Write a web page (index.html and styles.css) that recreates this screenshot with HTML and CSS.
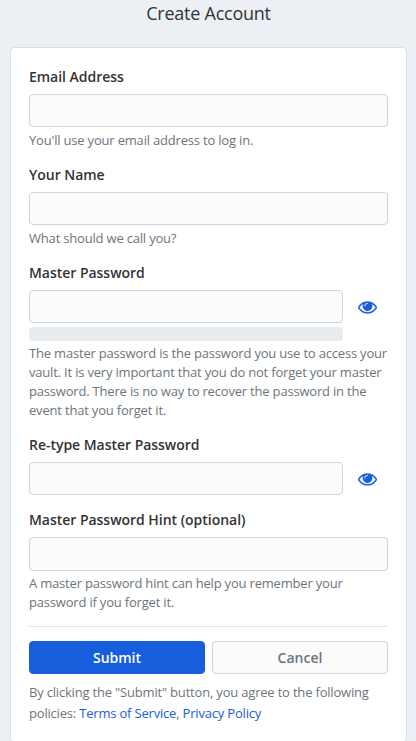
FILE: index.html
```html
<!DOCTYPE html>
<html lang="en">
<head>
<meta charset="utf-8">
<title>Create Account</title>
<link rel="stylesheet" href="styles.css">
</head>
<body>
<svg class="defs" aria-hidden="true">
  <symbol id="eye" viewBox="0 384 1792 1152"><path d="M1664 960q-152-236-381-353 61 104 61 225 0 185-131.500 316.500t-316.500 131.500-316.500-131.500-131.500-316.500q0-121 61-225-229 117-381 353 133 205 333.500 326.500t434.500 121.500 434.500-121.500 333.500-326.500zm-720-384q0-20-14-34t-34-14q-125 0-214.500 89.500t-89.500 214.500q0 20 14 34t34 14 34-14 14-34q0-86 61-147t147-61q20 0 34-14t14-34zm848 384q0 34-20 69-140 230-376.500 368.500t-499.500 138.500-499.500-139-376.500-368q-20-35-20-69t20-69q140-229 376.500-368t499.500-139 499.500 139 376.500 368q20 35 20 69z"/></symbol>
</svg>
<main class="page">
  <h1 class="title">Create Account</h1>
  <form class="card">
    <div class="group">
      <label class="label" for="email">Email Address</label>
      <input class="input" id="email" type="text">
      <p class="help">You'll use your email address to log in.</p>
    </div>
    <div class="group">
      <label class="label" for="name">Your Name</label>
      <input class="input" id="name" type="text">
      <p class="help">What should we call you?</p>
    </div>
    <div class="group">
      <label class="label" for="password">Master Password</label>
      <div class="password-row">
        <input class="input" id="password" type="password">
        <button class="toggle" type="button" aria-label="Toggle Visibility"><svg class="eye"><use href="#eye"/></svg></button>
      </div>
      <div class="strength"></div>
      <p class="help help-strength">The master password is the password you use to access your vault. It is very important that you do not forget your master password. There is no way to recover the password in the event that you forget it.</p>
    </div>
    <div class="group">
      <label class="label" for="retype">Re-type Master Password</label>
      <div class="password-row">
        <input class="input" id="retype" type="password">
        <button class="toggle" type="button" aria-label="Toggle Visibility"><svg class="eye"><use href="#eye"/></svg></button>
      </div>
    </div>
    <div class="group">
      <label class="label" for="hint">Master Password Hint (optional)</label>
      <input class="input input-hint" id="hint" type="text">
      <p class="help help-hint">A master password hint can help you remember your password if you forget it.</p>
    </div>
    <hr class="rule">
    <div class="actions">
      <button class="btn btn-primary" type="button">Submit</button>
      <button class="btn btn-outline" type="button">Cancel</button>
    </div>
    <p class="terms">By clicking the "Submit" button, you agree to the following policies: <a href="#">Terms of Service</a>, <a href="#">Privacy Policy</a></p>
  </form>
</main>
</body>
</html>
```
FILE: styles.css
```css
* {
  box-sizing: border-box;
}

body {
  margin: 0;
  height: 741px;
  overflow: hidden;
  background: #ecf0f5;
  color: #333;
  font: 14px/21px "Open Sans", "Noto Sans", sans-serif;
}

.defs {
  display: none;
}

.page {
  padding: 3px 9px 0 10px;
}

.title {
  margin: 0 0 23px;
  font-size: 18px;
  line-height: 21px;
  font-weight: 400;
  letter-spacing: -0.25px;
  text-align: center;
}

.card {
  height: 695px;
  padding: 18px 18px 0;
  background: #fff;
  border: 1px solid #dcdfe3;
  border-radius: 4px;
}

.group {
  margin-bottom: 14px;
}

.label {
  display: block;
  margin-bottom: 7px;
  font-weight: 600;
  letter-spacing: -0.03px;
}

.input {
  display: block;
  width: 100%;
  height: 33px;
  padding: 5px 10px;
  background: #fbfbfb;
  border: 1px solid #ced4da;
  border-radius: 4px;
  outline: 0;
  font: inherit;
}

.input-hint {
  height: 34px;
}

.help {
  margin: 4px 0 0;
  color: #6c757d;
  font-size: 13px;
  line-height: 19px;
  letter-spacing: -0.19px;
}

.help-strength,
.help-hint {
  margin-top: 3px;
}

.password-row {
  display: flex;
}

.toggle {
  display: flex;
  flex: none;
  width: 45px;
  padding: 2px 10px 0 15px;
  align-items: center;
  background: none;
  border: 0;
}

.eye {
  width: 19px;
  height: 13px;
  flex: none;
  fill: #175ddc;
  stroke: #175ddc;
  stroke-width: 25px;
}

.strength {
  width: calc(100% - 45px);
  height: 14px;
  margin-top: 4px;
  background: #e9ecef;
  border-radius: 4px;
}

.rule {
  margin: 14px 0;
  border: 0;
  border-top: 1px solid #e5e5e5;
}

.actions {
  display: grid;
  grid-template-columns: 1fr 1fr;
  gap: 7px;
}

.btn {
  height: 33px;
  padding: 0;
  border: 1px solid;
  border-radius: 4px;
  font: 600 14px/21px "Open Sans", "Noto Sans", sans-serif;
}

.btn-primary {
  background: #175ddc;
  border-color: #175ddc;
  color: #fff;
}

.btn-outline {
  background: #fbfbfb;
  border-color: #ced4da;
  color: #6c757d;
}

.terms {
  margin: 8px 0 0;
  color: #6c757d;
  font-size: 13px;
  letter-spacing: -0.19px;
}

.terms a {
  color: #175ddc;
  text-decoration: none;
}
```
